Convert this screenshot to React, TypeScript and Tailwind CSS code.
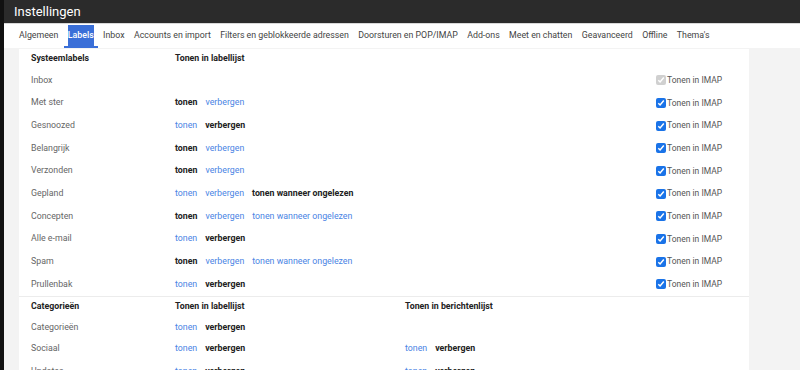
import React from "react";

type Link = { text: string; bold: boolean };

const tabs = [
  "Algemeen",
  "Labels",
  "Inbox",
  "Accounts en import",
  "Filters en geblokkeerde adressen",
  "Doorsturen en POP/IMAP",
  "Add-ons",
  "Meet en chatten",
  "Geavanceerd",
  "Offline",
  "Thema's",
];

const sys: { name: string; list: Link[]; imap: "on" | "disabled" }[] = [
  { name: "Inbox", list: [], imap: "disabled" },
  { name: "Met ster", list: [{ text: "tonen", bold: true }, { text: "verbergen", bold: false }], imap: "on" },
  { name: "Gesnoozed", list: [{ text: "tonen", bold: false }, { text: "verbergen", bold: true }], imap: "on" },
  { name: "Belangrijk", list: [{ text: "tonen", bold: true }, { text: "verbergen", bold: false }], imap: "on" },
  { name: "Verzonden", list: [{ text: "tonen", bold: true }, { text: "verbergen", bold: false }], imap: "on" },
  {
    name: "Gepland",
    list: [
      { text: "tonen", bold: false },
      { text: "verbergen", bold: false },
      { text: "tonen wanneer ongelezen", bold: true },
    ],
    imap: "on",
  },
  {
    name: "Concepten",
    list: [
      { text: "tonen", bold: true },
      { text: "verbergen", bold: false },
      { text: "tonen wanneer ongelezen", bold: false },
    ],
    imap: "on",
  },
  { name: "Alle e-mail", list: [{ text: "tonen", bold: false }, { text: "verbergen", bold: true }], imap: "on" },
  {
    name: "Spam",
    list: [
      { text: "tonen", bold: true },
      { text: "verbergen", bold: false },
      { text: "tonen wanneer ongelezen", bold: false },
    ],
    imap: "on",
  },
  { name: "Prullenbak", list: [{ text: "tonen", bold: false }, { text: "verbergen", bold: true }], imap: "on" },
];

const hideShow: Link[] = [
  { text: "tonen", bold: false },
  { text: "verbergen", bold: true },
];

const cats: { name: string; list: Link[]; msg: Link[] }[] = [
  { name: "Categorieën", list: hideShow, msg: [] },
  { name: "Sociaal", list: hideShow, msg: hideShow },
  { name: "Updates", list: hideShow, msg: hideShow },
];

function Links({ items }: { items: Link[] }) {
  return (
    <div className="flex items-center gap-[8px]">
      {items.map((it, i) =>
        it.bold ? (
          <span key={i} className="font-bold text-[#222]">
            {it.text}
          </span>
        ) : (
          <span key={i} className="text-[#4a84e4]">
            {it.text}
          </span>
        )
      )}
    </div>
  );
}

function Check({ disabled }: { disabled?: boolean }) {
  return (
    <span
      className={`flex items-center justify-center w-[10px] h-[10px] rounded-[2px] ${
        disabled ? "bg-[#d0d0d0]" : "bg-[#1a73e8]"
      }`}
    >
      <svg width="8" height="8" viewBox="0 0 8 8">
        <path d="M1.3 4.2 L3.1 6 L6.8 1.6" fill="none" stroke="white" strokeWidth="1.5" />
      </svg>
    </span>
  );
}

export default function App() {
  return (
    <div
      className="w-[800px] h-[370px] overflow-hidden bg-[#f3f3f3] flex text-[8.8px]"
      style={{ fontFamily: "Roboto, 'Liberation Sans', sans-serif" }}
    >
      <div className="w-[4px] bg-[#111] shrink-0" />
      <div className="flex-1 flex flex-col min-h-0">
        {/* title bar */}
        <div className="h-[24px] shrink-0 bg-[#2b2b2b] flex items-center pl-[10px] border-b border-[#d8d8d8]">
          <span className="text-white text-[13px] leading-none">Instellingen</span>
        </div>

        {/* tabs */}
        <div className="h-[24px] shrink-0 bg-white flex items-stretch pl-[15px] gap-[9.4px] text-[#444]">
          {tabs.map((t) =>
            t === "Labels" ? (
              <div key={t} className="relative flex items-center">
                <span className="bg-[#3a6fd8] text-white font-medium h-[22px] flex items-center">
                  {t}
                </span>
                <span className="absolute left-[-4px] right-[-4px] bottom-0 h-[2px] bg-[#3a6fd8]" />
              </div>
            ) : (
              <div key={t} className="flex items-center">
                {t}
              </div>
            )
          )}
        </div>

        {/* content */}
        <div className="flex-1 flex pt-[1px] min-h-0">
          <div className="w-[15px] shrink-0" />
          <div className="w-[730px] bg-white text-[#666]">
            <div className="grid grid-cols-[144px_230px_251px_1fr] items-center h-[20px] pl-[12px] font-bold text-[#222]">
              <span>Systeemlabels</span>
              <span>Tonen in labellijst</span>
              <span />
              <span />
            </div>
            {sys.map((r) => (
              <div
                key={r.name}
                className="grid grid-cols-[144px_230px_251px_1fr] items-center h-[22.67px] pl-[12px]"
              >
                <span>{r.name}</span>
                <Links items={r.list} />
                <span />
                <div className="flex items-center gap-[1px]">
                  <Check disabled={r.imap === "disabled"} />
                  <span className="text-[#555] text-[8.5px]">Tonen in IMAP</span>
                </div>
              </div>
            ))}
            <div className="border-t border-[#ececec]" />
            <div className="grid grid-cols-[144px_230px_251px_1fr] items-center h-[21px] pl-[12px] font-bold text-[#222]">
              <span>Categorieën</span>
              <span>Tonen in labellijst</span>
              <span>Tonen in berichtenlijst</span>
              <span />
            </div>
            {cats.map((r, i) => (
              <div
                key={r.name}
                className={`grid grid-cols-[144px_230px_251px_1fr] items-center pl-[12px] ${
                  i === 0 ? "h-[20px]" : "h-[22.67px]"
                }`}
              >
                <span>{r.name}</span>
                <Links items={r.list} />
                <Links items={r.msg} />
                <span />
              </div>
            ))}
          </div>
        </div>
      </div>
    </div>
  );
}
